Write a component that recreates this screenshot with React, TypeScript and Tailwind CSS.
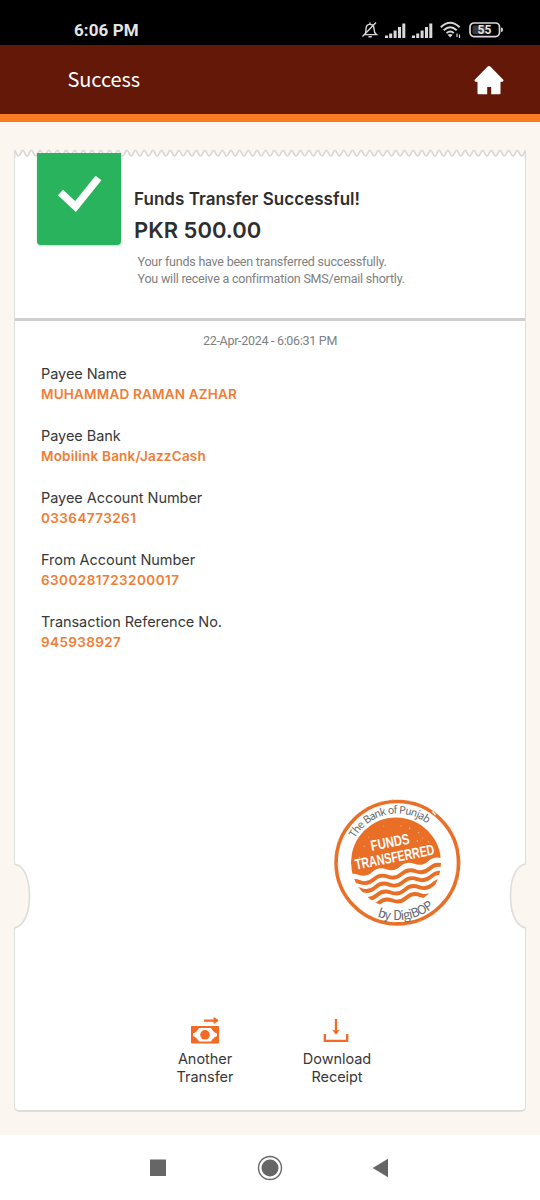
import React from "react";

const details = [
  { label: "Payee Name", value: "MUHAMMAD RAMAN AZHAR", spacing: "tracking-[0.2px]" },
  { label: "Payee Bank", value: "Mobilink Bank/JazzCash", spacing: "tracking-[0.22px]" },
  { label: "Payee Account Number", value: "03364773261", spacing: "tracking-[0.42px]" },
  { label: "From Account Number", value: "6300281723200017", spacing: "tracking-[0.45px]" },
  { label: "Transaction Reference No.", value: "945938927", spacing: "tracking-[0.38px]" },
];

function BellOff() {
  return (
    <svg width="18" height="18" viewBox="0 0 18 18" fill="none" stroke="#d8d8d8" strokeWidth="1.4">
      <path d="M4.2 12.8 C5 11.5 5 10 5 8 C5 5 6.500 3.400 9 3.400 C11.500 3.400 13 5 13 8 C13 10.500 13.500 12 15.500 13.600 H4" />
      <path d="M7.500 15.700 H10.800 M9 1.500 V3.400 M1.500 15.500 L15 1.500" />
    </svg>
  );
}

function Signal() {
  return (
    <svg width="21" height="15" viewBox="0 0 21 15" fill="#d8d8d8">
      <path d="M0 12.500h3v2.500h-3z M4.200 10.500h3v4.500h-3z M8.600 7.500h3v7.500h-3z M13 4h3v11h-3z M17.300 0.500h3v14.500h-3z" />
    </svg>
  );
}

function Wifi() {
  return (
    <svg width="22" height="18" viewBox="0 0 22 18" fill="none" stroke="#d8d8d8" strokeWidth="2">
      <path d="M0.800 6.300 Q10.200 -2.800 19.600 6.300 M3.700 9.300 Q10.200 3.200 16.700 9.300 M6.600 12 Q10.200 9 13.800 12" />
      <path d="M10.200 16.500 L7.700 13.800 Q10.200 12 12.700 13.800Z" fill="#d8d8d8" stroke="none" />
      <path d="M17 12.500V16 M19.500 13.500V17" strokeWidth="1.200" />
    </svg>
  );
}

function Battery() {
  return (
    <svg width="35" height="16" viewBox="0 0 35 16">
      <rect x="1" y="1" width="29.500" height="13.600" rx="4" fill="none" stroke="#d8d8d8" strokeWidth="1.700" />
      <rect x="3.500" y="3.500" width="13" height="8.600" rx="1.500" fill="#3a3a3a" />
      <path d="M32 5.500 Q34 5.500 34 7.800 Q34 10 32 10Z" fill="#d8d8d8" />
      <text x="15.500" y="12" textAnchor="middle" fontSize="12" fontWeight="700" fill="#e4e4e4" fontFamily="Roboto, sans-serif">55</text>
    </svg>
  );
}

function Scallops() {
  const n = 59;
  const step = 512 / n;
  let d = "M0.500 0.300";
  for (let i = 0; i < n; i++) {
    const x = i * step;
    d += ` C${x + step * 0.2} 0.300 ${x + step * 0.25} 6 ${x + step * 0.5} 6 S${x + step * 0.8} 0.300 ${x + step} 0.300`;
  }
  return (
    <svg className="block overflow-visible" width="512" height="8" viewBox="0 0 512 8">
      <path d={d + " V8 H0Z"} fill="#fff" />
      <path d={d} fill="none" stroke="#d9d8d5" strokeWidth="1.700" />
      <path d="M0.700 0V8M511.300 0V8" stroke="#dcdcdb" strokeWidth="1.500" />
    </svg>
  );
}

function wave(y: number) {
  let d = `M-53.600 ${y}`;
  for (let i = 0; i < 4; i++) {
    d += " q7.125 -4.400 14.250 0 t14.250 0";
  }
  return d;
}

function Stamp() {
  return (
    <svg className="overflow-visible" width="145" height="145" viewBox="0 0 145 145">
      <defs>
        <clipPath id="disc"><circle cx="0" cy="0" r="45" /></clipPath>
        <path id="topArc" d="M23.300 72.500 A49 49 0 0 1 121.300 72.500" />
        <path id="bottomArc" d="M15 72.500 A57.500 57.500 0 0 0 130 72.500" />
      </defs>
      <circle cx="72.300" cy="72.700" r="61.200" fill="#fff" stroke="#e96e26" strokeWidth="3.600" />
      <circle cx="72.300" cy="72.700" r="63" fill="none" stroke="#f4b48e" strokeWidth="0.800" strokeDasharray="3 7 1 4 5 9" />
      <circle cx="72.300" cy="72.700" r="59.400" fill="none" stroke="#f7cdb3" strokeWidth="0.600" strokeDasharray="2 6 4 11 1 5" />
      <path d="M107.500 21.500 l3 3.500" stroke="#fff" strokeWidth="1.200" />
      <g transform="translate(71 72.500) rotate(-11)">
        <g clipPath="url(#disc)">
          <path d={wave(4.8) + " V-60 H-54Z"} fill="#e96e26" />
          <g fill="none" stroke="#e96e26" strokeWidth="3.900">
            <path d={wave(12.3)} />
            <path d={wave(20.4)} />
            <path d={wave(28.5)} />
            <path d={wave(36.6)} />
          </g>
          <g fill="#f6c5a5">
            <circle cx="-28" cy="-22" r=".6" /><circle cx="-22" cy="-30" r=".5" /><circle cx="12" cy="-35" r=".6" />
            <circle cx="20" cy="-31" r=".7" /><circle cx="28" cy="-25" r=".6" /><circle cx="31" cy="-19" r=".5" />
            <circle cx="-35" cy="-12" r=".6" /><circle cx="-5" cy="-38" r=".5" /><circle cx="25" cy="-17" r=".7" />
            <circle cx="36" cy="-14" r=".6" />
          </g>
        </g>
        <g fill="#fff" fontWeight="700" fontFamily="'Liberation Sans Narrow', 'Liberation Sans', sans-serif">
          <text x="-21.500" y="-16" fontSize="15" textLength="39" lengthAdjust="spacingAndGlyphs">FUNDS</text>
          <text x="-40.500" y="-0.500" fontSize="15" textLength="80.500" lengthAdjust="spacingAndGlyphs">TRANSFERRED</text>
        </g>
      </g>
      <g fill="#66686c" fontFamily="'Noto Sans CJK SC', sans-serif">
        <text fontSize="10.500" textLength="84" wordSpacing="1"><textPath href="#topArc" startOffset="25">The Bank of Punjab</textPath></text>
        <text fontSize="12.500" textLength="60" wordSpacing="1.500"><textPath href="#bottomArc" startOffset="69.500">by DigiBOP</textPath></text>
      </g>
    </svg>
  );
}

export default function App() {
  return (
    <div className="flex h-[1200px] w-[540px] flex-col overflow-hidden bg-[#fcf6f0] font-['Inter',sans-serif]">
      <div className="flex h-[45px] shrink-0 items-end justify-between bg-black pr-[36px] pl-[74px]">
        <span className="pb-[5px] font-['Roboto',sans-serif] text-[17px] leading-5 font-bold tracking-[0.1px] text-[#e4e4e4]">6:06 PM</span>
        <div className="flex items-center pb-[6px]">
          <BellOff />
          <div className="ml-[6px] flex gap-[6px]"><Signal /><Signal /></div>
          <div className="ml-[7px]"><Wifi /></div>
          <div className="ml-[7px]"><Battery /></div>
        </div>
      </div>
      <header className="flex h-[77px] shrink-0 items-center justify-between border-b-8 border-[#fb7a26] bg-[#641807] pr-[36px] pl-[67.500px]">
        <h1 className="pb-[2px] font-['Noto_Sans_CJK_SC',sans-serif] text-[20px] leading-6 tracking-[-0.1px] text-white">Success</h1>
        <svg width="30" height="30" viewBox="0 0 30 30" fill="#fff">
          <path d="M15 1 Q15.800 1 16.600 1.800 L29.300 14.800 Q30 16 28.700 16.800 H26.500 V28.500 Q26.500 29.300 25.500 29.300 H17.200 V22 H13.200 V29.300 H4.500 Q3.500 29.300 3.500 28.500 V16.800 H1.300 Q0 16 .7 14.800 L13.400 1.800 Q14.200 1 15 1Z" />
        </svg>
      </header>
      <main className="h-[1013px] shrink-0 px-[14px] pt-[28px]">
        <section className="relative flex h-[962px] flex-col">
          <Scallops />
          <div className="flex flex-1 flex-col rounded-b-[5px] border-x-[1.5px] border-b-2 border-[#dcddde] bg-white">
            <div className="flex h-[163px] shrink-0 border-b-3 border-[#cfcfcf]">
              <div className="relative -mt-[5.500px] ml-[22px] flex h-[92.500px] w-[84px] items-start justify-center rounded-b-[4px] bg-[#29b35c] pt-[22px] pl-[1px] shadow-[0_1px_2px_#bfe5cd]">
                <svg width="46" height="38" viewBox="0 0 46 38" fill="none" stroke="#fff" strokeWidth="7.500">
                  <path d="M3.500 17.500 L18.500 31.500 L41.500 3" />
                </svg>
              </div>
              <div className="ml-[13px] pt-[29px] text-[#2e2e2e]">
                <h2 className="text-[17px] leading-[24px] font-semibold tracking-[0.04px] whitespace-nowrap">Funds Transfer Successful!</h2>
                <p className="mt-[3px] text-[22px] leading-[32px] font-semibold">PKR 500.00</p>
                <p className="mt-[7px] ml-[3.500px] font-['Roboto',sans-serif] text-[12.500px] leading-[17px] tracking-[-0.21px] whitespace-nowrap text-[#808080]">
                  Your funds have been transferred successfully.<br />You will receive a confirmation SMS/email shortly.
                </p>
              </div>
            </div>
            <time className="mt-[11px] block text-center font-['Roboto',sans-serif] text-[12.500px] leading-[18px] tracking-[-0.3px] text-[#808080]">22-Apr-2024 - 6:06:31 PM</time>
            <dl className="mt-[13px] ml-[26px] flex flex-col gap-[20px]">
              {details.map((d) => (
                <div key={d.label} className="h-[42px]">
                  <dt className="text-[14.500px] leading-[22px] tracking-[-0.05px] text-[#383838]">{d.label}</dt>
                  <dd className={`text-[13.500px] leading-[19px] font-semibold text-[#f07d35] ${d.spacing}`}>{d.value}</dd>
                </div>
              ))}
            </dl>
            <div className="mt-[137px] ml-[309.500px] h-[145px]"><Stamp /></div>
            <div className="mt-[82px] flex pl-[145px] text-center text-[14.500px] leading-[18px] tracking-[-0.05px] text-[#383838]">
              <button className="flex w-[90px] flex-col items-center">
                <svg width="30" height="27" viewBox="0 0 30 27">
                  <path d="M1.500 9.500 H28.500 V26 H1.500Z" fill="#f26a24" stroke="#f26a24" strokeWidth="1" strokeLinejoin="round" />
                  <path d="M9 11 H21 Q23.500 15.500 27 16.500 V19 Q23.500 20 21 24.600 H9 Q6.500 20 3 19 V16.500 Q6.500 15.500 9 11Z" fill="#fff" />
                  <circle cx="15" cy="17.800" r="4.800" fill="#f26a24" />
                  <path d="M14 2.500H23.500V.6Q24 0 25 .7L28 2.800Q28.600 3.500 28 4.200L25 6.300Q24 7 23.500 6.400V4.800H14Z" fill="#f26a24" />
                </svg>
                <span className="mt-[6px]">Another<br />Transfer</span>
              </button>
              <button className="ml-[42px] flex w-[90px] flex-col items-center">
                <svg className="-ml-[2px]" width="26" height="27" viewBox="0 0 26 27" fill="none" stroke="#f26a24" strokeWidth="2.300">
                  <path d="M13 2V15 M1.800 17V23.800H24.200V17" />
                  <path d="M9 12.500Q13 14.500 17 12.500L13 17.800Z" fill="#f26a24" stroke="none" />
                </svg>
                <span className="mt-[6px]">Download<br />Receipt</span>
              </button>
            </div>
          </div>
          <svg className="absolute top-[713px] -left-[1px]" width="18" height="66" viewBox="0 0 18 66">
            <path d="M0 0 H2 C12 2 16.500 18 16.500 33 C16.500 48 12 63 2 65 H0Z" fill="#fcf6f0" />
            <path d="M1 1 C12 2 16.500 18 16.500 33 C16.500 48 12 63 1 65" fill="none" stroke="#dedddb" strokeWidth="1.600" />
          </svg>
          <svg className="absolute top-[713px] -right-[1px]" width="18" height="66" viewBox="0 0 18 66">
            <path d="M18 0 H16 C6 2 1.500 18 1.500 33 C1.500 48 6 63 16 65 H18Z" fill="#fcf6f0" />
            <path d="M17 1 C6 2 1.500 18 1.500 33 C1.500 48 6 63 17 65" fill="none" stroke="#dedddb" strokeWidth="1.600" />
          </svg>
        </section>
      </main>
      <nav className="flex h-[65px] shrink-0 items-center justify-between bg-white pr-[151px] pl-[149px]">
        <svg width="18" height="18" viewBox="0 0 18 18"><rect x="1" y="0.500" width="16" height="16.500" fill="#666" /></svg>
        <svg width="26" height="26" viewBox="0 0 26 26"><circle cx="13" cy="13" r="11.500" fill="none" stroke="#666" strokeWidth="1.400" /><circle cx="13" cy="13" r="8.500" fill="#666" /></svg>
        <svg width="17" height="20" viewBox="0 0 17 20"><path d="M16 .8V19.200L.7 10Z" fill="#666" /></svg>
      </nav>
    </div>
  );
}
